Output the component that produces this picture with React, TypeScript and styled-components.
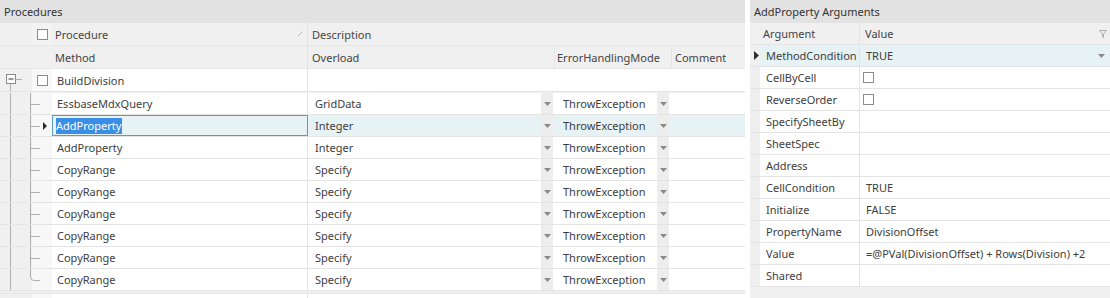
import React from "react";
import styled, { createGlobalStyle } from "styled-components";

const Global = createGlobalStyle`
  html, body { margin: 0; padding: 0; background: #ffffff; }
  body {
    font-family: "Noto Sans", "Open Sans", sans-serif;
    font-size: 11px;
    color: #3d3d3d;
  }
  * { box-sizing: border-box; }
`;

const Page = styled.div`
  display: flex;
  gap: 5px;
  width: 1110px;
  height: 298px;
  overflow: hidden;
  background: #ffffff;
`;

const Panel = styled.section<{ $w?: number }>`
  display: flex;
  flex-direction: column;
  width: ${(p) => (p.$w ? `${p.$w}px` : "auto")};
  flex: ${(p) => (p.$w ? "none" : "1")};
  background: #f0f0f0;
  overflow: hidden;
`;

const TitleBar = styled.div`
  height: 23px;
  flex: none;
  display: flex;
  align-items: center;
  padding-left: 4px;
  background: #e2e2e2;
  color: #333;
`;

const Row = styled.div<{ $h?: number; $bg?: string }>`
  display: flex;
  flex: none;
  height: ${(p) => p.$h ?? 22}px;
  background: ${(p) => p.$bg ?? "#ffffff"};
  border-bottom: 1px solid #e4e4e4;
`;

const HeaderRow = styled(Row)`
  background: #f0f0f0;
  border-bottom: 1px solid #e6e6e6;
  color: #444;
`;

const Gutter = styled.div<{ $w: number; $bg?: string }>`
  width: ${(p) => p.$w}px;
  flex: none;
  display: flex;
  align-items: center;
  background: ${(p) => p.$bg ?? "#f0f0f0"};
  position: relative;
`;

const Cell = styled.div<{ $w?: number; $pad?: number; $line?: boolean }>`
  width: ${(p) => (p.$w ? `${p.$w}px` : "auto")};
  flex: ${(p) => (p.$w ? "none" : "1")};
  display: flex;
  align-items: center;
  padding-left: ${(p) => p.$pad ?? 5}px;
  border-right: ${(p) => (p.$line === false ? "none" : "1px solid #e4e4e4")};
  white-space: nowrap;
  overflow: hidden;
  min-width: 0;
`;

const CellText = styled.span`
  flex: 1;
  overflow: hidden;
`;

const SelectedCell = styled(Cell)`
  border: 1px solid #5b9cc0;
  padding-left: 3px;
`;

const Highlight = styled.span`
  background: #3a8ee6;
  color: #ffffff;
  padding: 0 1px 1px 0;
  line-height: 15px;
`;

const DropButton = styled.div`
  width: 12px;
  align-self: stretch;
  flex: none;
  margin-right: 3px;
  background: #ededed;
  display: flex;
  align-items: center;
  justify-content: center;
`;

const Check = styled.span`
  width: 11px;
  height: 11px;
  flex: none;
  border: 1px solid #8c8c8c;
  background: #ffffff;
  display: inline-block;
`;

const Filler = styled.div`
  flex: 1;
  background: #f0f0f0;
`;

const BottomRow = styled.div`
  display: flex;
  flex: 1;
  margin-top: 2px;
  border-top: 1px solid #e6e6e6;
`;

const Arrow = () => (
  <svg width="7" height="4" viewBox="0 0 7 4">
    <path d="M0 0 H7 L3.5 4 Z" fill="#8a8a8a" />
  </svg>
);

const RowPointer = () => (
  <svg width="5" height="9" viewBox="0 0 5 9">
    <path d="M0 0 L5 4.5 L0 9 Z" fill="#2b2b2b" />
  </svg>
);

const SortGlyph = () => (
  <svg width="6" height="6" viewBox="0 0 6 6" style={{ marginRight: 4 }}>
    <path d="M0.5 5.5 L5.5 0.5" stroke="#b8b8b8" strokeWidth="1" />
  </svg>
);

const FilterGlyph = () => (
  <svg width="8" height="8" viewBox="0 0 8 8">
    <path d="M0.5 0.5 H7.5 L4.5 4 V7.5 L3.5 7 V4 Z" fill="none" stroke="#b0b0b0" strokeWidth="1" />
  </svg>
);

const ExpanderGutter = () => (
  <svg width="32" height="22" viewBox="0 0 32 22">
    <rect x="6.5" y="5.5" width="9" height="9" fill="#ffffff" stroke="#8a8a8a" />
    <line x1="8.5" y1="10" x2="13.5" y2="10" stroke="#333" />
    <line x1="16" y1="10.5" x2="22" y2="10.5" stroke="#b0b0b0" />
    <line x1="10.5" y1="15" x2="10.5" y2="22" stroke="#b0b0b0" />
  </svg>
);

const TreeLines = ({ last, current }: { last?: boolean; current?: boolean }) => (
  <svg width="52" height="21" viewBox="0 0 52 21">
    <rect x="0" y="0" width="32" height="21" fill="#f0f0f0" />
    <rect x="32" y="0" width="20" height="21" fill="#f7f7f7" />
    <line x1="10.5" y1="0" x2="10.5" y2="21" stroke="#b0b0b0" />
    {last ? (
      <path d="M30.5 0 V8 Q30.5 11.5 34 11.5 H40" fill="none" stroke="#b0b0b0" />
    ) : (
      <path d="M30.5 0 V22 M30.5 11.5 H40" fill="none" stroke="#b0b0b0" />
    )}
    {current && <path d="M43 7 L47 11 L43 15 Z" fill="#2b2b2b" />}
  </svg>
);

type Step = { method: string; overload: string; current?: boolean };

const steps: Step[] = [
  { method: "EssbaseMdxQuery", overload: "GridData" },
  { method: "AddProperty", overload: "Integer", current: true },
  { method: "AddProperty", overload: "Integer" },
  { method: "CopyRange", overload: "Specify" },
  { method: "CopyRange", overload: "Specify" },
  { method: "CopyRange", overload: "Specify" },
  { method: "CopyRange", overload: "Specify" },
  { method: "CopyRange", overload: "Specify" },
  { method: "CopyRange", overload: "Specify" },
];

type Arg = { name: string; value?: string; check?: boolean; current?: boolean };

const args: Arg[] = [
  { name: "MethodCondition", value: "TRUE", current: true },
  { name: "CellByCell", check: true },
  { name: "ReverseOrder", check: true },
  { name: "SpecifySheetBy" },
  { name: "SheetSpec" },
  { name: "Address" },
  { name: "CellCondition", value: "TRUE" },
  { name: "Initialize", value: "FALSE" },
  { name: "PropertyName", value: "DivisionOffset" },
  { name: "Value", value: "=@PVal(DivisionOffset) + Rows(Division) +2" },
  { name: "Shared" },
];

const ProceduresPanel = () => (
  <Panel $w={745}>
    <TitleBar>Procedures</TitleBar>
    <HeaderRow $h={23}>
      <Gutter $w={32} />
      <Gutter $w={20} $bg="#f3f3f3" style={{ justifyContent: "center" }}>
        <Check />
      </Gutter>
      <Cell $w={256} $pad={3}>
        <CellText>Procedure</CellText>
        <SortGlyph />
      </Cell>
      <Cell $pad={4} $line={false}>Description</Cell>
    </HeaderRow>
    <HeaderRow $h={23}>
      <Gutter $w={52} />
      <Cell $w={256} $pad={3}>Method</Cell>
      <Cell $w={247} $pad={4}>Overload</Cell>
      <Cell $w={117} $pad={2}>ErrorHandlingMode</Cell>
      <Cell $pad={3} $line={false}>Comment</Cell>
    </HeaderRow>
    <Row $h={23}>
      <Gutter $w={32}>
        <ExpanderGutter />
      </Gutter>
      <Gutter $w={20} $bg="#f8f8f8" style={{ justifyContent: "center" }}>
        <Check />
      </Gutter>
      <Cell $w={256} $pad={5}>BuildDivision</Cell>
      <Cell $line={false} />
    </Row>
    <Row $h={1} $bg="#f0f0f0" style={{ borderBottom: "none" }} />
    {steps.map((s, i) => (
      <Row key={i} $bg={s.current ? "#e6f2f4" : "#ffffff"}>
        <Gutter $w={52}>
          <TreeLines last={i === steps.length - 1} current={s.current} />
        </Gutter>
        {s.current ? (
          <SelectedCell $w={256}>
            <Highlight>{s.method}</Highlight>
          </SelectedCell>
        ) : (
          <Cell $w={256} $pad={5}>{s.method}</Cell>
        )}
        <Cell $w={248} $pad={7} $line={false}>
          <CellText>{s.overload}</CellText>
          <DropButton>
            <Arrow />
          </DropButton>
        </Cell>
        <Cell $w={116} $pad={7} $line={false}>
          <CellText>ThrowException</CellText>
          <DropButton>
            <Arrow />
          </DropButton>
        </Cell>
        <Cell $line={false} />
      </Row>
    ))}
    <BottomRow>
      <Gutter $w={32} />
      <Gutter $w={20} $bg="#f8f8f8" />
      <Cell $w={256} style={{ background: "#fff" }} />
      <Cell $line={false} style={{ background: "#fff" }} />
    </BottomRow>
  </Panel>
);

const ArgumentsPanel = () => (
  <Panel>
    <TitleBar>AddProperty Arguments</TitleBar>
    <HeaderRow $h={22}>
      <Gutter $w={10} />
      <Cell $w={100} $pad={3}>Argument</Cell>
      <Cell $pad={5} $line={false}>
        <CellText>Value</CellText>
        <span style={{ marginRight: 3, display: "flex" }}>
          <FilterGlyph />
        </span>
      </Cell>
    </HeaderRow>
    {args.map((a) => (
      <Row key={a.name} $bg={a.current ? "#e6f2f4" : "#ffffff"}>
        <Gutter $w={10} $bg="#efefef" style={{ justifyContent: "center", paddingLeft: 2 }}>
          {a.current && <RowPointer />}
        </Gutter>
        <Cell $w={100} $pad={6}>{a.name}</Cell>
        <Cell $pad={a.check ? 3 : 6} $line={false}>
          {a.check ? <Check /> : <CellText>{a.value ?? ""}</CellText>}
          {a.current && (
            <DropButton style={{ background: "transparent" }}>
              <Arrow />
            </DropButton>
          )}
        </Cell>
      </Row>
    ))}
    <Filler />
  </Panel>
);

export default function App() {
  return (
    <>
      <Global />
      <Page>
        <ProceduresPanel />
        <ArgumentsPanel />
      </Page>
    </>
  );
}
